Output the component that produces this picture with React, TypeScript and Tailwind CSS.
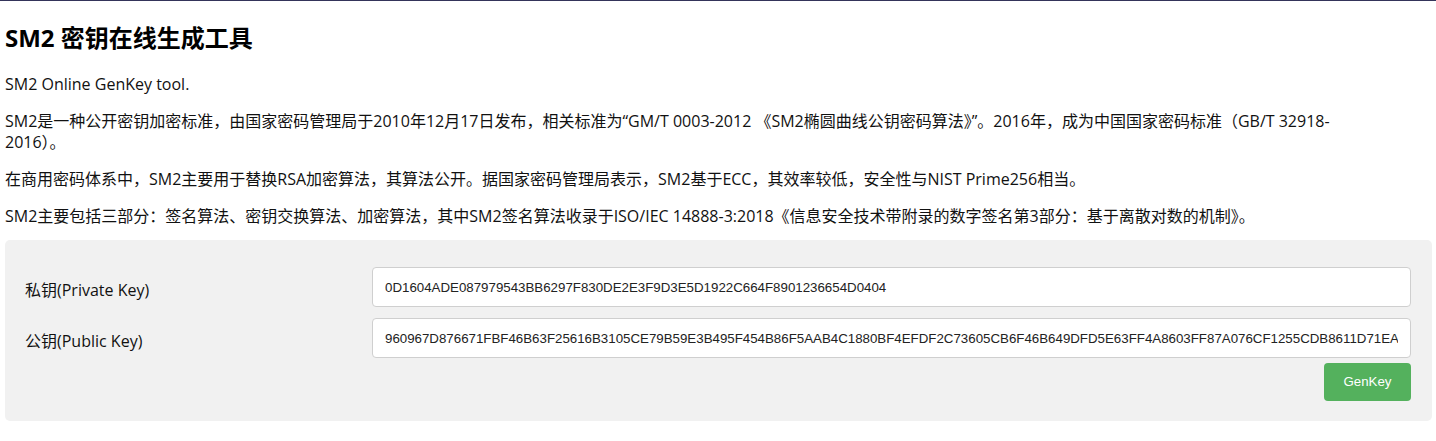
const PRIVATE_KEY = "0D1604ADE087979543BB6297F830DE2E3F9D3E5D1922C664F8901236654D0404";
const PUBLIC_KEY =
  "960967D876671FBF46B63F25616B3105CE79B59E3B495F454B86F5AAB4C1880BF4EFDF2C73605CB6F46B649DFD5E63FF4A8603FF87A076CF1255CDB8611D71EA8C3F0E2B6D5A94B1C72E";

const font = "font-['Open_Sans','Noto_Sans_CJK_SC',sans-serif]";

const KeyRow = ({ label, value }: { label: string; value: string }) => {
  return (
    <div className="grid grid-cols-[347px_1fr] items-center">
      <label className="pt-[5px] text-[16px] text-[#111]">{label}</label>
      <input
        readOnly
        value={value}
        className="h-[40px] w-full rounded-[4px] border border-[#cfcfcf] bg-white px-[12px] font-['Liberation_Sans',Arial,sans-serif] text-[13.3px] text-[#222] outline-none"
      />
    </div>
  );
};

export default function App() {
  return (
    <div className={`min-h-[441px] border-t border-[#34345a] bg-white ${font} text-[#111]`}>
      <div className="pl-[5px] pr-[4px]">
        <h1 className="mt-[21px] text-[24px] leading-[32px] font-bold text-black">SM2 密钥在线生成工具</h1>
        <p className="mt-[20px] text-[16px] leading-[21px]">SM2 Online GenKey tool.</p>
        {/* narrower box so the line breaks after "32918-" like the original */}
        <p className="mt-[16px] pr-[60px] text-[16px] leading-[21px]">
          SM2是一种公开密钥加密标准，由国家密码管理局于2010年12月17日发布，相关标准为“GM/T 0003-2012 《SM2椭圆曲线公钥密码算法》”。2016年，成为中国国家密码标准（GB/T 32918-2016）。
        </p>
        <p className="mt-[16px] text-[16px] leading-[21px]">
          在商用密码体系中，SM2主要用于替换RSA加密算法，其算法公开。据国家密码管理局表示，SM2基于ECC，其效率较低，安全性与NIST Prime256相当。
        </p>
        <p className="mt-[16px] text-[16px] leading-[21px]">
          SM2主要包括三部分：签名算法、密钥交换算法、加密算法，其中SM2签名算法收录于ISO/IEC 14888-3:2018《信息安全技术带附录的数字签名第3部分：基于离散对数的机制》。
        </p>
        <div className="mt-[13px] flex flex-col rounded-[5px] bg-[#f1f1f1] pt-[27px] pr-[21px] pb-[20px] pl-[20px]">
          <div className="flex flex-col gap-[11px]">
            <KeyRow label="私钥(Private Key)" value={PRIVATE_KEY} />
            <KeyRow label="公钥(Public Key)" value={PUBLIC_KEY} />
          </div>
          <div className="mt-[5px] flex justify-end">
            <button className="h-[38px] w-[87px] rounded-[4px] bg-[#54b15d] font-['Liberation_Sans',Arial,sans-serif] text-[13.3px] text-white">
              GenKey
            </button>
          </div>
        </div>
      </div>
    </div>
  );
}
